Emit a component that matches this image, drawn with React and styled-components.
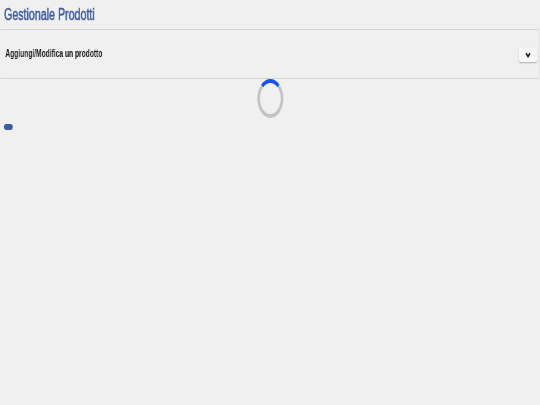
import React from "react";
import styled, { createGlobalStyle } from "styled-components";

const Global = createGlobalStyle`
  html, body { margin: 0; padding: 0; background: #f0f0f0; overflow: hidden; }
  body {
    font-family: "Liberation Sans", Arial, sans-serif;
    -webkit-font-smoothing: antialiased;
  }
`;

const Page = styled.div`
  width: 810px;
  height: 405px;
  transform: scaleX(0.6667);
  transform-origin: 0 0;
  will-change: transform;
  background: #f0f0f0;
  display: flex;
  flex-direction: column;
`;

const Title = styled.h1`
  margin: 0;
  padding: 6px 0 0 6px;
  height: 24px;
  box-sizing: border-box;
  font-size: 16px;
  line-height: 18px;
  font-weight: 400;
  color: #3d5c9e;
  -webkit-text-stroke: 0.55px #3d5c9e;
`;

const Panel = styled.section`
  margin: 5px 1px 0 0;
  border: 1px solid #d4d4d4;
  border-left-color: transparent;
  background: #f0f0f0;
`;

const PanelHeader = styled.div`
  height: 48px;
  display: flex;
  align-items: center;
  justify-content: space-between;
  padding: 0 2px 0 7px;
`;

const PanelTitle = styled.span`
  font-size: 10px;
  font-weight: 700;
  color: #111;
  margin-top: -1px;
`;

const ToggleButton = styled.button`
  width: 28px;
  height: 14px;
  padding: 0;
  margin-top: 1px;
  border: none;
  border-radius: 3px;
  background: #f8f8f8;
  box-shadow: 0 1px 2px rgba(0, 0, 0, 0.28);
  display: flex;
  align-items: center;
  justify-content: center;
  color: #222;
`;

const Spinner = styled.div`
  align-self: center;
  width: 39px;
  height: 39px;
  box-sizing: border-box;
  border-radius: 50%;
  border: 4px solid #c3c3c3;
  border-top-color: #1652f0;
`;

const Pill = styled.button`
  align-self: flex-start;
  margin: 6px 0 0 6px;
  width: 13px;
  height: 6px;
  padding: 0;
  border: none;
  border-radius: 3px;
  background: #3d5c9e;
`;

export default function App() {
  return (
    <>
      <Global />
      <Page>
        <Title>Gestionale Prodotti</Title>
        <Panel>
          <PanelHeader>
            <PanelTitle>Aggiungi/Modifica un prodotto</PanelTitle>
            <ToggleButton aria-label="espandi">
              <svg width="8" height="6" viewBox="0 0 8 6">
                <polyline points="1,1.2 4,4.4 7,1.2" fill="none" stroke="#1a1a1a" strokeWidth="2.2" />
              </svg>
            </ToggleButton>
          </PanelHeader>
        </Panel>
        <Spinner />
        <Pill />
      </Page>
    </>
  );
}
